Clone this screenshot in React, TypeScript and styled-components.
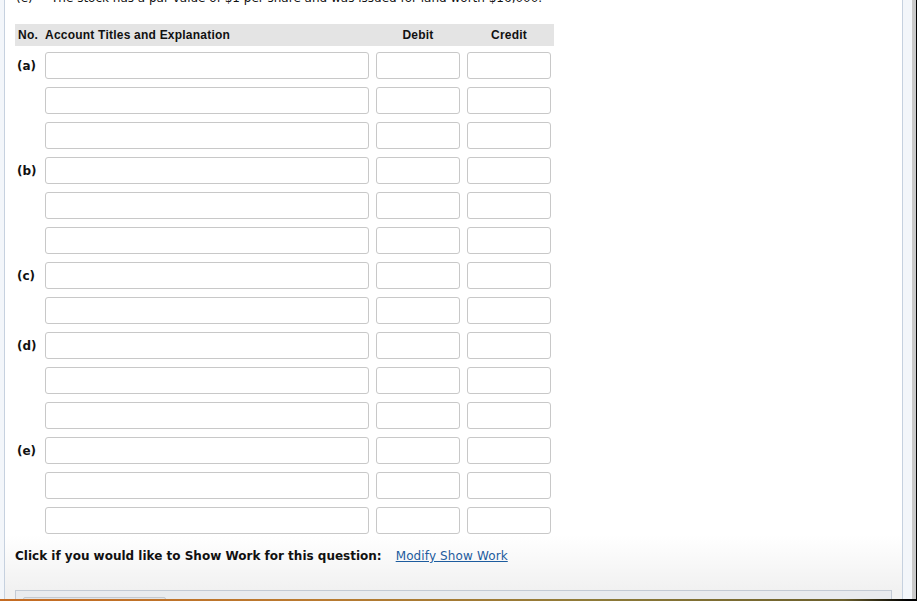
import React from 'react'
import styled, { createGlobalStyle } from 'styled-components'

type Entry = {
    label?: string;
}

const GlobalStyle = createGlobalStyle`
    html, body {
        margin: 0;
        padding: 0;
        background: #ffffff;
        overflow: hidden;
    }
`

const Screen = styled.div`
    width: 917px;
    height: 601px;
    display: flex;
    flex-direction: column;
    overflow: hidden;
    font-family: "DejaVu Sans", Verdana, sans-serif;
    color: #111;
`

const WindowRow = styled.div`
    display: flex;
    height: 599px;
`

const LeftRail = styled.div`
    width: 4px;
    background: #f3f6fa;
    border-right: 1px solid #c6d1df;
`

const RightRail = styled.div`
    width: 9px;
    background: #f3f6fa;
    border-left: 1px solid #c6d1df;
`

const GrayEdge = styled.div`
    width: 4px;
    background: #c9c9c9;
`

const BlackEdge = styled.div`
    width: 1px;
    background: #000;
`

const Main = styled.main`
    flex: 1;
    overflow: hidden;
    padding-left: 10px;
    background: linear-gradient(to bottom, #ffffff 0, #ffffff 535px, #f1f1f1 590px);
`

const Taskbar = styled.div`
    height: 2px;
    background: linear-gradient(to right, #c56b22 0%, #b97a30 35%, #8d7a38 65%, #6b5f2c 92%, #000 99%);
`

const Question = styled.div`
    display: flex;
    margin-top: -9px;
    height: 15px;
    line-height: 15px;
    font-size: 12px;
    white-space: nowrap;
`

const QuestionTag = styled.span`
    width: 35px;
    padding-left: 1px;
`

const Journal = styled.div`
    width: 539px;
    margin-top: 18px;
`

const Columns = styled.div`
    display: grid;
    grid-template-columns: 23px 324px 84px 84px;
    column-gap: 7px;
    align-items: center;
`

const HeaderBar = styled(Columns)`
    height: 22px;
    background: #e4e4e4;
    font-family: "Liberation Sans", Arial, sans-serif;
    font-weight: bold;
    font-size: 12px;
    letter-spacing: 0.22px;
`

const HeadCell = styled.div<{ center?: boolean; inset?: number }>`
    text-align: ${p => p.center ? 'center' : 'left'};
    padding-left: ${p => p.inset ?? 0}px;
    white-space: nowrap;
`

const Rows = styled.div`
    display: flex;
    flex-direction: column;
    gap: 8px;
    margin-top: 6px;
`

const Label = styled.div`
    font-weight: bold;
    font-size: 12px;
    padding-left: 2px;
    white-space: nowrap;
`

const Field = styled.input`
    box-sizing: border-box;
    height: 27px;
    width: 100%;
    min-width: 0;
    margin: 0;
    border: 1px solid #c8c8c8;
    border-radius: 3px;
    background: #fff;
    outline: none;
`

const ShowWork = styled.div`
    margin-top: 15px;
    height: 15px;
    line-height: 15px;
    font-size: 12px;
    white-space: nowrap;
`

const Prompt = styled.span`
    font-weight: bold;
`

const Link = styled.a`
    margin-left: 14px;
    color: #1d5c9e;
    letter-spacing: 0.12px;
    text-decoration: underline;
`

const BottomPanel = styled.div`
    box-sizing: border-box;
    width: 877px;
    height: 40px;
    margin-top: 26px;
    border: 1px solid #c3cad4;
    background: #e9ebee;
    padding: 6px 0 0 7px;
`

const Tab = styled.div`
    width: 141px;
    height: 20px;
    border: 1px solid #c3c8cf;
    border-radius: 2px 2px 0 0;
    background: #e2e4e7;
`

const entries: Entry[] = [
    { label: '(a)' }, {}, {},
    { label: '(b)' }, {}, {},
    { label: '(c)' }, {},
    { label: '(d)' }, {}, {},
    { label: '(e)' }, {}, {},
]

const App: React.FC = () =>
    <>
        <GlobalStyle />
        <Screen>
            <WindowRow>
                <LeftRail />
                <Main>
                    <Question>
                        <QuestionTag>(e)</QuestionTag>
                        <span>The stock has a par value of $1 per share and was issued for land worth $16,000.</span>
                    </Question>
                    <Journal>
                        <HeaderBar>
                            <HeadCell inset={3}>No.</HeadCell>
                            <HeadCell>Account Titles and Explanation</HeadCell>
                            <HeadCell center>Debit</HeadCell>
                            <HeadCell center>Credit</HeadCell>
                        </HeaderBar>
                        <Rows>
                            {entries.map((e, i) =>
                                <Columns key={i}>
                                    <Label>{e.label}</Label>
                                    <Field type="text" />
                                    <Field type="text" />
                                    <Field type="text" />
                                </Columns>
                            )}
                        </Rows>
                    </Journal>
                    <ShowWork>
                        <Prompt>Click if you would like to Show Work for this question:</Prompt>
                        <Link href="#">Modify Show Work</Link>
                    </ShowWork>
                    <BottomPanel>
                        <Tab />
                    </BottomPanel>
                </Main>
                <RightRail />
                <GrayEdge />
                <BlackEdge />
            </WindowRow>
            <Taskbar />
        </Screen>
    </>

export default App
